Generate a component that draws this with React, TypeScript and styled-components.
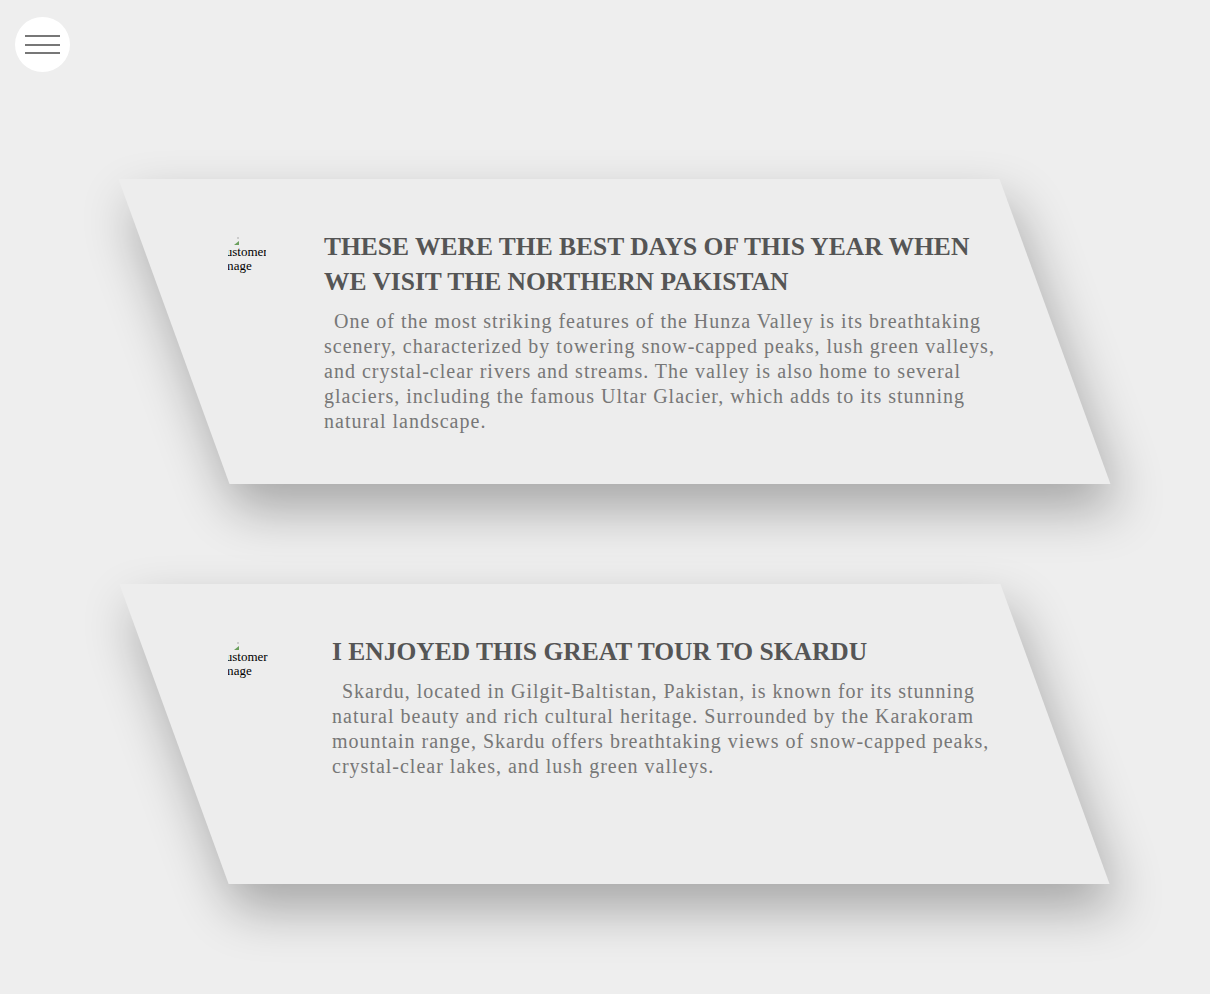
import React from "react";
import styled, { createGlobalStyle } from "styled-components";

const GlobalStyle = createGlobalStyle`
  html, body {
    margin: 0;
    padding: 0;
    background-color: #eeeeee;
    font-family: "Liberation Serif", "DejaVu Serif", serif;
  }
`;

const Page = styled.div`
  min-height: 994px;
  background-color: #eeeeee;
  padding-top: 179px;
  box-sizing: border-box;
`;

const MenuButton = styled.button`
  position: fixed;
  left: 15px;
  top: 17px;
  width: 55px;
  height: 55px;
  border-radius: 50%;
  border: none;
  background-color: #ffffff;
  display: flex;
  flex-direction: column;
  align-items: center;
  justify-content: center;
  gap: 6.5px;
  padding: 0;
  cursor: pointer;

  span {
    display: block;
    width: 35px;
    height: 2px;
    background-color: #777777;
  }
`;

const CardList = styled.div`
  display: flex;
  flex-direction: column;
  gap: 100px;
  margin-left: 174px;
`;

const Card = styled.div<{ $minHeight: number }>`
  width: 881px;
  min-height: ${(p) => p.$minHeight}px;
  display: flex;
  background-color: #ededed;
  transform: skewX(20deg);
  box-shadow: 0 25px 50px rgba(0, 0, 0, 0.3);
`;

const Inner = styled.div`
  flex: 1;
  display: flex;
  align-items: flex-start;
  padding: 50px 60px 50px 54px;
  transform: skewX(-20deg);
`;

/* broken image: icon + clipped alt text */
const Avatar = styled.div<{ $width: number }>`
  width: ${(p) => p.$width}px;
  flex-shrink: 0;
  margin-top: 8px;
  overflow: hidden;
  font-family: "Liberation Serif", serif;
  font-size: 13px;
  line-height: 14px;
  color: #000000;

  .alt {
    margin-left: -8px;
    white-space: nowrap;
  }
  .icon {
    display: block;
    margin-left: 5px;
    margin-bottom: -1px;
  }
`;

const Text = styled.div<{ $offset: number }>`
  flex: 1;
  margin-left: ${(p) => p.$offset}px;
`;

const Title = styled.h2`
  margin: 0 0 10px;
  font-size: 25.5px;
  line-height: 35px;
  font-weight: 700;
  color: #555555;
`;

const Body = styled.p`
  margin: 0;
  font-size: 20px;
  line-height: 25px;
  letter-spacing: 1px;
  text-indent: 10px;
  color: #777777;
`;

interface Review {
  title: string;
  text: string;
  minHeight: number;
  imgWidth: number;
  offset: number;
}

const reviews: Review[] = [
  {
    title: "THESE WERE THE BEST DAYS OF THIS YEAR WHEN WE VISIT THE NORTHERN PAKISTAN",
    text: "One of the most striking features of the Hunza Valley is its breathtaking scenery, characterized by towering snow-capped peaks, lush green valleys, and crystal-clear rivers and streams. The valley is also home to several glaciers, including the famous Ultar Glacier, which adds to its stunning natural landscape.",
    minHeight: 300,
    imgWidth: 38,
    offset: 58,
  },
  {
    title: "I ENJOYED THIS GREAT TOUR TO SKARDU",
    text: "Skardu, located in Gilgit-Baltistan, Pakistan, is known for its stunning natural beauty and rich cultural heritage. Surrounded by the Karakoram mountain range, Skardu offers breathtaking views of snow-capped peaks, crystal-clear lakes, and lush green valleys.",
    minHeight: 300,
    imgWidth: 40,
    offset: 64,
  },
];

const BrokenImage: React.FC<{ width: number }> = ({ width }) => (
  <Avatar $width={width}>
    <svg className="icon" width="7" height="9" viewBox="0 0 7 9">
      <path d="M1 8 L6 8 L6 4 Z" fill="#6a9e5c" />
      <path d="M5 0 L5 2" stroke="#aaa" strokeWidth="1" />
    </svg>
    <div className="alt">customer</div>
    <div className="alt">image</div>
  </Avatar>
);

export default function App() {
  return (
    <>
      <GlobalStyle />
      <MenuButton aria-label="menu">
        <span />
        <span />
        <span />
      </MenuButton>
      <Page>
        <CardList>
          {reviews.map((r) => (
            <Card key={r.title} $minHeight={r.minHeight}>
              <Inner>
                <BrokenImage width={r.imgWidth} />
                <Text $offset={r.offset}>
                  <Title>{r.title}</Title>
                  <Body>{r.text}</Body>
                </Text>
              </Inner>
            </Card>
          ))}
        </CardList>
      </Page>
    </>
  );
}
